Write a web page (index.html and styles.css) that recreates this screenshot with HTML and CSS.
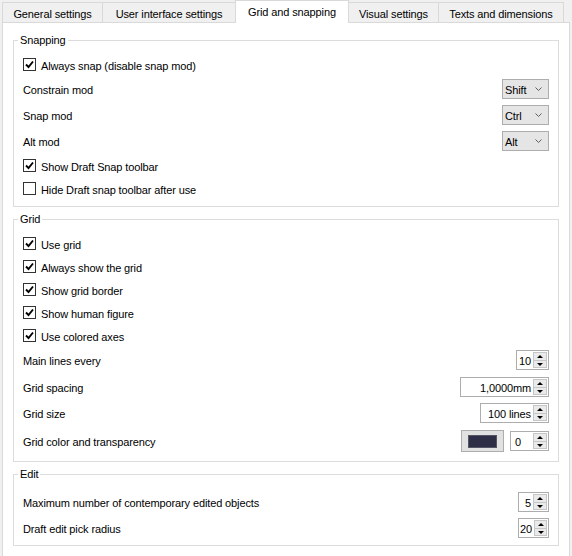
FILE: index.html
```html
<!DOCTYPE html>
<html>
<head>
<meta charset="utf-8">
<link rel="stylesheet" href="styles.css">
</head>
<body>
<div class="tabs">
  <div class="tab w1">General settings</div>
  <div class="tab w2">User interface settings</div>
  <div class="tab w3 active">Grid and snapping</div>
  <div class="tab w4">Visual settings</div>
  <div class="tab w5">Texts and dimensions</div>
</div>
<div class="pane">
  <fieldset class="group">
    <legend>Snapping</legend>
    <div class="rows pt10 pb9">
      <div class="row check-row"><span class="cb on"><svg viewBox="0 0 11 11"><path d="M2 5.5 L4.5 8 L9 2.5"/></svg></span><span class="lbl">Always snap (disable snap mod)</span></div>
      <div class="row field-row"><span class="lbl">Constrain mod</span><span class="combo"><span class="lbl">Shift</span><svg class="chev" viewBox="0 0 7 4"><path d="M0.5 0.5 L3.5 3.5 L6.5 0.5"/></svg></span></div>
      <div class="row field-row"><span class="lbl">Snap mod</span><span class="combo"><span class="lbl">Ctrl</span><svg class="chev" viewBox="0 0 7 4"><path d="M0.5 0.5 L3.5 3.5 L6.5 0.5"/></svg></span></div>
      <div class="row field-row"><span class="lbl">Alt mod</span><span class="combo"><span class="lbl">Alt</span><svg class="chev" viewBox="0 0 7 4"><path d="M0.5 0.5 L3.5 3.5 L6.5 0.5"/></svg></span></div>
      <div class="row check-row"><span class="cb on"><svg viewBox="0 0 11 11"><path d="M2 5.5 L4.5 8 L9 2.5"/></svg></span><span class="lbl">Show Draft Snap toolbar</span></div>
      <div class="row check-row"><span class="cb"></span><span class="lbl">Hide Draft snap toolbar after use</span></div>
    </div>
  </fieldset>
  <fieldset class="group">
    <legend>Grid</legend>
    <div class="rows pt10 pb9">
      <div class="row check-row"><span class="cb on"><svg viewBox="0 0 11 11"><path d="M2 5.5 L4.5 8 L9 2.5"/></svg></span><span class="lbl">Use grid</span></div>
      <div class="row check-row"><span class="cb on"><svg viewBox="0 0 11 11"><path d="M2 5.5 L4.5 8 L9 2.5"/></svg></span><span class="lbl">Always show the grid</span></div>
      <div class="row check-row"><span class="cb on"><svg viewBox="0 0 11 11"><path d="M2 5.5 L4.5 8 L9 2.5"/></svg></span><span class="lbl">Show grid border</span></div>
      <div class="row check-row"><span class="cb on"><svg viewBox="0 0 11 11"><path d="M2 5.5 L4.5 8 L9 2.5"/></svg></span><span class="lbl">Show human figure</span></div>
      <div class="row check-row"><span class="cb on"><svg viewBox="0 0 11 11"><path d="M2 5.5 L4.5 8 L9 2.5"/></svg></span><span class="lbl">Use colored axes</span></div>
      <div class="row field-row"><span class="lbl">Main lines every</span><span class="spin sw32"><span class="val">10</span><span class="btns"><span class="up"></span><span class="dn"></span></span></span></div>
      <div class="row field-row mt1"><span class="lbl">Grid spacing</span><span class="spin sw88"><span class="val">1,0000mm</span><span class="btns"><span class="up"></span><span class="dn"></span></span></span></div>
      <div class="row field-row"><span class="lbl">Grid size</span><span class="spin sw68"><span class="val">100 lines</span><span class="btns"><span class="up"></span><span class="dn"></span></span></span></div>
      <div class="row color-row mt1"><span class="lbl">Grid color and transparency</span><span class="pair"><span class="colorbtn"><span class="swatch"></span></span><span class="spin sw38 left"><span class="val">0</span><span class="btns"><span class="up"></span><span class="dn"></span></span></span></span></div>
    </div>
  </fieldset>
  <fieldset class="group">
    <legend>Edit</legend>
    <div class="rows pt12 pb7">
      <div class="row field-row"><span class="lbl">Maximum number of contemporary edited objects</span><span class="spin sw30"><span class="val">5</span><span class="btns"><span class="up"></span><span class="dn"></span></span></span></div>
      <div class="row field-row"><span class="lbl">Draft edit pick radius</span><span class="spin sw30"><span class="val">20</span><span class="btns"><span class="up"></span><span class="dn"></span></span></span></div>
    </div>
  </fieldset>
</div>
</body>
</html>
```
FILE: styles.css
```css
* { box-sizing: border-box; }
html, body { margin: 0; padding: 0; }
body {
  width: 572px;
  height: 556px;
  overflow: hidden;
  background: #f0f0f0;
  font-family: "Liberation Sans", Arial, sans-serif;
  font-size: 11px;
  letter-spacing: -0.12px;
  color: #000;
}
.tabs {
  display: flex;
  align-items: flex-end;
  height: 22px;
  padding-left: 2px;
  position: relative;
  z-index: 1;
}
.tab {
  height: 20px;
  border: 1px solid #d9d9d9;
  border-bottom: none;
  margin-right: -1px;
  background: #f0f0f0;
  display: flex;
  align-items: center;
  justify-content: center;
  padding-top: 2px;
  white-space: nowrap;
}
.tab.active {
  height: 23px;
  margin-bottom: -1px;
  background: #fff;
  padding-top: 0;
  padding-bottom: 1px;
  position: relative;
  z-index: 2;
}
.w1 { width: 101px; }
.w2 { width: 134px; }
.w3 { width: 114px; }
.w4 { width: 91px; }
.w5 { width: 126px; }

.pane {
  margin: 0 2px;
  height: 560px;
  border: 1px solid #d9d9d9;
  background: #fff;
  padding: 11px 10px 0 10px;
  display: flex;
  flex-direction: column;
  gap: 6px;
}
.group {
  margin: 0;
  padding: 0;
  border: 1px solid #dcdcdc;
  min-width: 0;
}
.group legend {
  margin-left: 4px;
  padding: 0 2px;
  line-height: 12px;
  height: 12px;
}
.rows {
  padding: 0 9px;
  display: flex;
  flex-direction: column;
  gap: 6px;
}
.pt10 { padding-top: 10px; }
.pt12 { padding-top: 12px; }
.pb9 { padding-bottom: 9px; }
.pb7 { padding-bottom: 7px; }
.mt1 { margin-top: 1px; }

.row {
  display: flex;
  align-items: center;
}
.lbl { padding-top: 2px; }
.check-row { height: 17px; }
.field-row { height: 20px; justify-content: space-between; }
.color-row { height: 22px; justify-content: space-between; }

.cb {
  width: 13px;
  height: 13px;
  border: 1px solid #333;
  background: #fff;
  margin-right: 5px;
  flex: none;
  display: flex;
}
.cb svg {
  width: 11px;
  height: 11px;
  fill: none;
  stroke: #000;
  stroke-width: 1.9;
}

.combo {
  width: 47px;
  height: 20px;
  border: 1px solid #adadad;
  background: #e5e5e5;
  display: flex;
  align-items: center;
  justify-content: space-between;
  padding: 0 6px 0 2px;
}
.chev {
  width: 7px;
  height: 4px;
  fill: none;
  stroke: #606060;
  stroke-width: 1;
}

.spin {
  height: 20px;
  border: 1px solid #adadad;
  background: #fff;
  display: flex;
  align-items: stretch;
  padding: 1px;
}
.spin .val {
  flex: 1;
  display: flex;
  align-items: center;
  justify-content: flex-end;
  padding-right: 2px;
  padding-top: 2px;
}
.spin.left .val { justify-content: flex-start; padding-left: 3px; }
.btns {
  width: 14px;
  display: flex;
  flex-direction: column;
  border: 1px solid #c6c6c6;
  background: #eaeaea;
}
.btns span {
  flex: 1;
  position: relative;
}
.btns .up { border-bottom: 1px solid #c6c6c6; }
.btns .up::after, .btns .dn::after {
  content: "";
  position: absolute;
  left: 3px;
  border-left: 3px solid transparent;
  border-right: 3px solid transparent;
}
.btns .up::after { top: 2px; border-bottom: 3px solid #000; }
.btns .dn::after { top: 2px; border-top: 3px solid #000; }
.sw30 { width: 31px; }
.sw32 { width: 33px; }
.sw38 { width: 39px; }
.sw68 { width: 69px; }
.sw88 { width: 89px; }

.pair {
  display: flex;
  align-items: center;
  gap: 6px;
}
.colorbtn {
  width: 43px;
  height: 22px;
  border: 1px solid #adadad;
  background: #e1e1e1;
  display: flex;
  align-items: center;
  justify-content: center;
}
.swatch {
  width: 29px;
  height: 13px;
  background: #2f2e47;
  border: 1px solid #555566;
}
```
